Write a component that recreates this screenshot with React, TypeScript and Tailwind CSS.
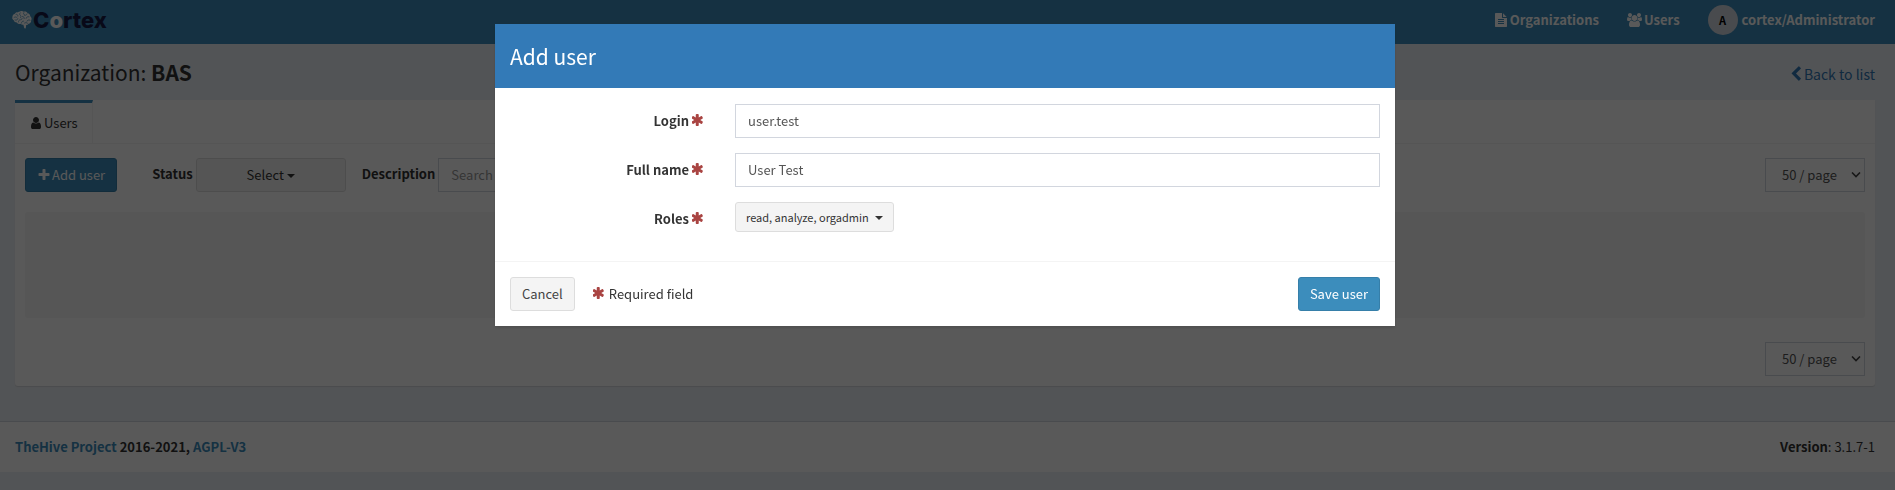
import type { ReactNode } from "react";

const ICONS = {
  asterisk:
    "M1386 922q46 26 59.5 77.5t-12.5 97.5l-64 110q-26 46-77.5 59.5t-97.5-12.5l-266-153v307q0 52-38 90t-90 38h-128q-52 0-90-38t-38-90v-307l-266 153q-46 26-97.5 12.5t-77.5-59.5l-64-110q-26-46-12.5-97.5t59.5-77.5l266-154-266-154q-46-26-59.5-77.5t12.5-97.5l64-110q26-46 77.5-59.5t97.5 12.5l266 153v-307q0-52 38-90t90-38h128q52 0 90 38t38 90v307l266-153q46-26 97.5-12.5t77.5 59.5l64 110q26 46 12.5 97.5t-59.5 77.5l-266 154z",
  plus: "M1600 736v192q0 40-28 68t-68 28h-416v416q0 40-28 68t-68 28h-192q-40 0-68-28t-28-68v-416h-416q-40 0-68-28t-28-68v-192q0-40 28-68t68-28h416v-416q0-40 28-68t68-28h192q40 0 68 28t28 68v416h416q40 0 68 28t28 68z",
  user: "M1536 1399q0 109-62.5 187t-150.5 78h-854q-88 0-150.5-78t-62.5-187q0-85 8.5-160.5t31.5-152 58.5-131 94-89 134.5-34.5q131 128 313 128t313-128q76 0 134.5 34.5t94 89 58.5 131 31.5 152 8.5 160.5zm-256-887q0 159-112.5 271.5t-271.5 112.5-271.5-112.5-112.5-271.5 112.5-271.5 271.5-112.5 271.5 112.5 112.5 271.5z",
  users:
    "M593 896q-162 5-265 128h-134q-82 0-138-40.5t-56-118.5q0-353 124-353 6 0 43.5 21t97.5 42.5 119 21.5q67 0 133-23-5 37-5 66 0 139 81 256zm1071 637q0 120-73 189.5t-194 69.5h-874q-121 0-194-69.5t-73-189.5q0-53 3.5-103.5t14-109 26.5-108.500 43-97.500 62-81 85.500-53.500 111.500-20q10 0 43 21.500t73 48 107 48 135 21.500 135-21.500 107-48 73-48 43-21.500q61 0 111.500 20t85.500 53.500 62 81 43 97.500 26.500 108.500 14 109 3.500 103.500zm-1024-1277q0 106-75 181t-181 75-181-75-75-181 75-181 181-75 181 75 75 181zm704 384q0 159-112.500 271.500t-271.500 112.500-271.500-112.500-112.500-271.500 112.500-271.500 271.500-112.500 271.500 112.500 112.500 271.500zm576 225q0 78-56 118.500t-138 40.500h-134q-103-123-265-128 81-117 81-256 0-29-5-66 66 23 133 23 59 0 119-21.500t97.500-42.500 43.500-21q124 0 124 353zm-128-609q0 106-75 181t-181 75-181-75-75-181 75-181 181-75 181 75 75 181z",
  fileText:
    "M1596 476q14 14 28 36h-472v-472q22 14 36 28zm-476 164h544v1056q0 40-28 68t-68 28h-1344q-40 0-68-28t-28-68v-1600q0-40 28-68t68-28h800v544q0 40 28 68t68 28zm160 736v-64q0-14-9-23t-23-9h-704q-14 0-23 9t-9 23v64q0 14 9 23t23 9h704q14 0 23-9t9-23zm0-256v-64q0-14-9-23t-23-9h-704q-14 0-23 9t-9 23v64q0 14 9 23t23 9h704q14 0 23-9t9-23zm0-256v-64q0-14-9-23t-23-9h-704q-14 0-23 9t-9 23v64q0 14 9 23t23 9h704q14 0 23-9t9-23z",
  chevronLeft:
    "M1427 301l-531 531 531 531q19 19 19 45t-19 45l-166 166q-19 19-45 19t-45-19l-742-742q-19-19-19-45t19-45l742-742q19-19 45-19t45 19l166 166q19 19 19 45t-19 45z",
};

function Icon({ name, viewBox = "0 0 1792 1792", className = "size-3.5" }: { name: keyof typeof ICONS; viewBox?: string; className?: string }) {
  return (
    <svg viewBox={viewBox} fill="currentColor" aria-hidden="true" className={`shrink-0 ${className}`}>
      <path d={ICONS[name]} />
    </svg>
  );
}

function BrainLogo() {
  return (
    <svg viewBox="0 0 20 18" aria-hidden="true" className="h-[18px] w-5 shrink-0">
      <path
        fill="#fff"
        d="M8 .6C9.300-.2 10.900 0 11.700.8 13.300.3 15 .9 15.600 2.200 17.200 2.500 18.300 3.700 18.200 5.200 19.600 6.200 20 8 19.200 9.300 19.400 11 18.200 12.500 16.600 12.700 16 13.600 15.100 14 14.200 13.900L13.700 17.600 12.300 17.200 11.400 13.700C10.300 14 9.200 13.600 8.700 12.800 7.200 13.300 5.500 12.800 4.900 11.500 3.300 11.600 2 10.700 1.800 9.300.5 8.700-.1 7.300.5 6.100.2 4.600 1.200 3.300 2.600 3 3.200 1.800 4.500 1.200 5.700 1.400 6.300.9 7.100.6 8 .6z"
      />
      <path
        fill="none"
        stroke="#3c8dbc"
        strokeWidth=".7"
        strokeLinecap="round"
        d="M4 3.200c1.200 0 2 .8 1.900 1.900M2 6.500c1-.9 2.500-.7 3.200.3M8.300 1.800c-.9.8-.8 2 .1 2.600s.8 1.900-.1 2.500M11.800 1.600c-.7.9-.3 1.900.6 2.300M15 3c-.3 1-1.200 1.500-2.300 1.300M17 5.800c-1.500-.4-2.700.3-2.900 1.500M10.500 5.500c1.300 0 2 1 1.700 2.100M3 9c1.300.4 2.500-.1 2.900-1.200M6.500 11c-.2-1.200.6-2.200 1.900-2.200 1 0 1.600-.6 1.700-1.300M9.500 12c0-1.200.8-2 2-1.900M18 9.200c-1.200-.6-2.600-.2-3 .9M12.600 12c.9-.6 2.200-.5 2.900.2"
      />
    </svg>
  );
}

function Required() {
  return <Icon name="asterisk" viewBox="64 0 1664 1792" className="h-3.5 w-[13px] text-[#a94442]" />;
}

function Caret() {
  return (
    <svg viewBox="0 0 8 4" fill="currentColor" aria-hidden="true" className="mt-0.5 h-1 w-2 shrink-0">
      <path d="M0 0h8L4 4z" />
    </svg>
  );
}

function PageSize({ label }: { label: string }) {
  return (
    <div className="grid w-[100px] items-center">
      <select
        aria-label={label}
        className="col-start-1 row-start-1 h-[34px] appearance-none border border-[#d2d6de] bg-white pl-4 text-[#555]"
      >
        <option>50 / page</option>
      </select>
      <svg
        viewBox="0 0 10 6"
        fill="none"
        stroke="#444"
        strokeWidth="1.6"
        aria-hidden="true"
        className="pointer-events-none col-start-1 row-start-1 mr-1 h-1.5 w-2.5 justify-self-end"
      >
        <path d="M1 .5l4 4 4-4" />
      </svg>
    </div>
  );
}

function FormRow({ id, label, children }: { id: string; label: string; children: ReactNode }) {
  return (
    <div className="flex min-h-[34px] gap-[30px]">
      <label htmlFor={id} className="flex h-[34px] w-[195px] shrink-0 items-center justify-end gap-[3px] font-bold">
        {label}
        <Required />
      </label>
      <div className="flex-1">{children}</div>
    </div>
  );
}

const inputClass = "block h-[34px] w-full border border-[#d2d6de] bg-white px-3 pb-0.5 text-[#555]";

export default function App() {
  return (
    <div className="min-h-screen bg-[#ecf0f5] font-['Noto_Sans_CJK_SC','Source_Sans_Pro',sans-serif] text-[13px] leading-5 text-[#333]">
      <header className="flex h-11 items-center justify-between bg-[#3c8dbc] pr-5 pl-3">
        <a href="#" className="flex items-center gap-px pb-1 font-['Inter',sans-serif] text-[22px] leading-none font-extrabold text-[#171c45]">
          <BrainLogo />
          <span>
            C<span className="text-white">o</span>rtex
          </span>
        </a>
        <nav className="flex items-center pb-1 font-bold text-white">
          <a href="#" className="flex items-center gap-0.5">
            <Icon name="fileText" />
            Organizations
          </a>
          <a href="#" className="ml-7 flex items-center gap-0.5">
            <Icon name="users" viewBox="0 0 1920 1792" className="h-3.5 w-[15px]" />
            Users
          </a>
          <a href="#" className="ml-7 flex items-center gap-1">
            <span className="flex size-[30px] items-center justify-center rounded-full bg-[#d2d6de] text-[11px] text-black">A</span>
            cortex/Administrator
          </a>
        </nav>
      </header>

      <main className="pt-3.5 pr-5 pb-[35px] pl-[15px]">
        <div className="flex h-[42px] items-start justify-between">
          <h1 className="text-[21px] leading-7">
            Organization: <b>BAS</b>
          </h1>
          <a href="#" className="flex items-center pt-1 text-sm leading-6 text-[#337ab7]">
            <Icon name="chevronLeft" className="size-4" />
            Back to list
          </a>
        </div>

        <section className="rounded-b-[3px] bg-white shadow-[0_1px_1px_rgba(0,0,0,0.1)]">
          <div className="flex h-11 border-b border-[#f4f4f4]">
            <a href="#" className="flex items-center gap-px border-t-[3px] border-r border-t-[#3c8dbc] border-r-[#f4f4f4] px-3.5">
              <Icon name="user" />
              Users
            </a>
          </div>
          <div className="p-2.5 pt-3.5">
            <div className="flex items-center">
              <button type="button" className="flex h-[34px] items-center gap-px rounded-[3px] border border-[#367fa9] bg-[#3c8dbc] px-[11px] text-white">
                <Icon name="plus" />
                Add user
              </button>
              <span id="status-label" className="ml-[35px] pb-0.5 font-bold">
                Status
              </span>
              <button
                type="button"
                aria-labelledby="status-label"
                className="ml-[3px] flex h-[34px] w-[150px] items-center justify-center gap-[3px] rounded-[3px] border border-[#ddd] bg-[#f4f4f4]"
              >
                Select
                <Caret />
              </button>
              <label htmlFor="description" className="ml-4 pb-0.5 font-bold">
                Description
              </label>
              <input
                id="description"
                placeholder="Search"
                className="mr-auto ml-[3px] h-[34px] w-[250px] border border-[#d2d6de] bg-white px-3 pb-0.5 placeholder:text-[#999]"
              />
              <PageSize label="Users per page, top" />
            </div>
            <div className="mt-5 mb-6 h-[106px] rounded-[3px] bg-[#f5f5f5]" />
            <div className="flex justify-end">
              <PageSize label="Users per page, bottom" />
            </div>
          </div>
        </section>
      </main>

      <footer className="flex justify-between border-t border-[#d2d6de] bg-white py-[15px] pr-5 pl-[15px]">
        <p className="font-bold">
          <a href="#" className="text-[#3c8dbc]">
            TheHive Project
          </a>{" "}
          2016-2021,{" "}
          <a href="#" className="text-[#3c8dbc]">
            AGPL-V3
          </a>
        </p>
        <p>
          <b>Version</b>: 3.1.7-1
        </p>
      </footer>

      <div className="fixed inset-0 flex items-start justify-center bg-black/65 pt-6 pr-[5px]">
        <form role="dialog" aria-labelledby="dialog-title" className="w-full max-w-[900px] bg-white shadow-[0_2px_3px_rgba(0,0,0,0.125)]">
          <h2 id="dialog-title" className="bg-[#337ab7] px-[15px] py-[18px] text-[21px] leading-7 text-white">
            Add user
          </h2>
          <div className="flex flex-col gap-[15px] px-[15px] pt-4 pb-[25px]">
            <FormRow id="login" label="Login">
              <input id="login" defaultValue="user.test" className={inputClass} />
            </FormRow>
            <FormRow id="fullname" label="Full name">
              <input id="fullname" defaultValue="User Test" className={inputClass} />
            </FormRow>
            <FormRow id="roles" label="Roles">
              <button id="roles" type="button" className="flex h-[30px] items-center gap-1.5 rounded-[3px] border border-[#ddd] bg-[#f4f4f4] px-2.5 text-[11px]">
                read, analyze, orgadmin
                <Caret />
              </button>
            </FormRow>
          </div>
          <div className="flex items-center border-t border-[#f4f4f4] p-[15px]">
            <button type="button" className="h-[34px] rounded-[3px] border border-[#ddd] bg-[#f4f4f4] px-[11px] text-[#444]">
              Cancel
            </button>
            <span className="ml-[18px] flex items-center gap-[3px]">
              <Required />
              Required field
            </span>
            <button type="submit" className="ml-auto h-[34px] rounded-[3px] border border-[#367fa9] bg-[#3c8dbc] px-[11px] text-white">
              Save user
            </button>
          </div>
        </form>
      </div>
    </div>
  );
}
